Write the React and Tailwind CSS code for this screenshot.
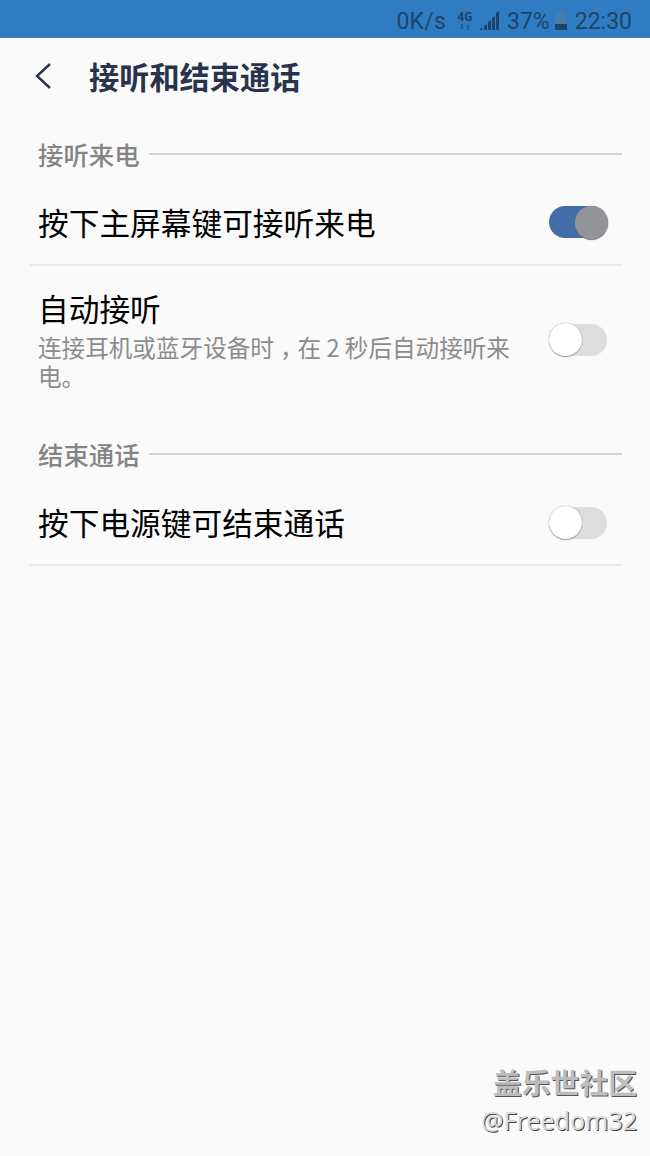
/* ----------------------------------------------------------------------------------------------
App.jsx
Call settings screen: answering and ending calls
------------------------------------------------------------------------------------------------- */

function StatusBar() {
  return (
    <div className="flex h-[38px] items-center justify-end border-b border-[#4a7fae] bg-[#2f7cc2] pr-[18px] pt-[5px] font-['Roboto',sans-serif] text-[23px] leading-none text-[#1d4468]">
      <span className="tracking-[0.2px]">0K/s</span>
      <div className="ml-[11px] flex w-4 flex-col items-center">
        <span className="font-['Noto_Sans',sans-serif] text-[11.5px] font-bold leading-[10px]">4G</span>
        <svg className="mt-[2px] h-[6px] w-3 opacity-50" viewBox="0 0 12 6" fill="currentColor">
          <path d="M1 3L3 6L5 3H4V0H2V3ZM7 3L9 0L11 3H10V6H8V3Z" />
        </svg>
      </div>
      <svg className="ml-[7px] mb-px h-5 w-[19px]" viewBox="0 0 19 20" fill="currentColor">
        <path d="M0 18l2-2v3H0zM4 15l3-2v6H4zM8 11l3-2v10H8zM12 7l3-2v14h-3zM16 2l3-2v19h-3z" />
      </svg>
      <span className="ml-[8px]">37%</span>
      <svg className="ml-[5px] mr-px mb-px h-[18px] w-3" viewBox="0 0 12 18" fill="currentColor">
        <path d="M3 0h6v2h3v10H0V2h3z" fill="#477da8" />
        <path d="M0 12h12v6H0z" />
      </svg>
      <span className="ml-[7px]">22:30</span>
    </div>
  );
}

function Switch({ on }) {
  return (
    <div
      className={
        on
          ? "flex h-8 w-[58px] shrink-0 items-center justify-end rounded-full bg-[#436da9]"
          : "flex h-8 w-[58px] shrink-0 items-center rounded-full bg-[#dddddd]"
      }
    >
      <div
        className={
          on
            ? "-mr-px size-[33px] shrink-0 rounded-full bg-[#929497] shadow-[0_1px_1px_#777,0_0_1px_#777]"
            : "size-[33px] shrink-0 rounded-full bg-white shadow-[0_1px_1px_#999,0_0_1px_#777]"
        }
      />
    </div>
  );
}

function SectionTitle({ children }) {
  return (
    <div className="flex h-[30px] items-center gap-[9px] pl-[9px]">
      <h2 className="pb-[2px] text-[25.4px] font-medium leading-[30px] text-[#858585]">{children}</h2>
      <div className="mb-[2px] h-[2px] flex-1 bg-[#d0d2d1]" />
    </div>
  );
}

function App() {
  return (
    <div className="flex h-[1156px] w-[650px] flex-col bg-[#fafafa] font-['Noto_Sans_CJK_SC',sans-serif]">
      <StatusBar />

      {/* The header */}
      <header className="flex h-[78px] items-center pb-[2px] pl-[35px]">
        <svg className="h-[26px] w-4" viewBox="0 0 16 26" fill="none" stroke="#29334b" strokeWidth="2.4">
          <path d="M15 1L2 13L15 25" />
        </svg>
        <h1 className="ml-[38px] text-[30.2px] font-bold leading-none text-[#29334b]">接听和结束通话</h1>
      </header>

      <main className="flex flex-col pl-[29px] pr-[28px] pt-[24px]">
        <SectionTitle>接听来电</SectionTitle>
        <div className="flex h-[96px] items-center justify-between border-b-2 border-[#e9e9e9] pl-[9px] pr-[15px] pt-[10px]">
          <span className="text-[30.7px] leading-none text-black">按下主屏幕键可接听来电</span>
          <Switch on />
        </div>
        <div className="flex h-[148px] items-center justify-between pb-px pl-[9px] pr-[15px]">
          <div className="w-[490px]">
            <div className="mb-[5px] text-[30.7px] leading-[40px] text-black">自动接听</div>
            <p className="text-[23.6px] leading-[29px] text-[#8c8c8c]">
              连接耳机或蓝牙设备时<span className="-mr-[6px] inline-block pl-[6px]">，</span>在 2 秒后自动接听来
              <br />
              电。
            </p>
          </div>
          <Switch />
        </div>

        <div className="h-[26px]" />
        <SectionTitle>结束通话</SectionTitle>
        <div className="flex h-[96px] items-center justify-between border-b-2 border-[#e9e9e9] pl-[9px] pr-[15px] pt-[11px]">
          <span className="text-[30.7px] leading-none text-black">按下电源键可结束通话</span>
          <Switch />
        </div>
      </main>

      {/* The community signature */}
      <footer className="mt-auto flex flex-col items-end pb-[19px] pr-[13px]">
        <span className="mb-[2px] text-[28.8px] font-bold leading-[38px] text-[#bdbdbd] [text-shadow:1px_1px_0_#555]">盖乐世社区</span>
        <span className="font-['Noto_Sans',sans-serif] text-[25px] leading-[34px] text-[#dadada] [text-shadow:1px_1px_0_#444]">@Freedom32</span>
      </footer>
    </div>
  );
}

export default App;
